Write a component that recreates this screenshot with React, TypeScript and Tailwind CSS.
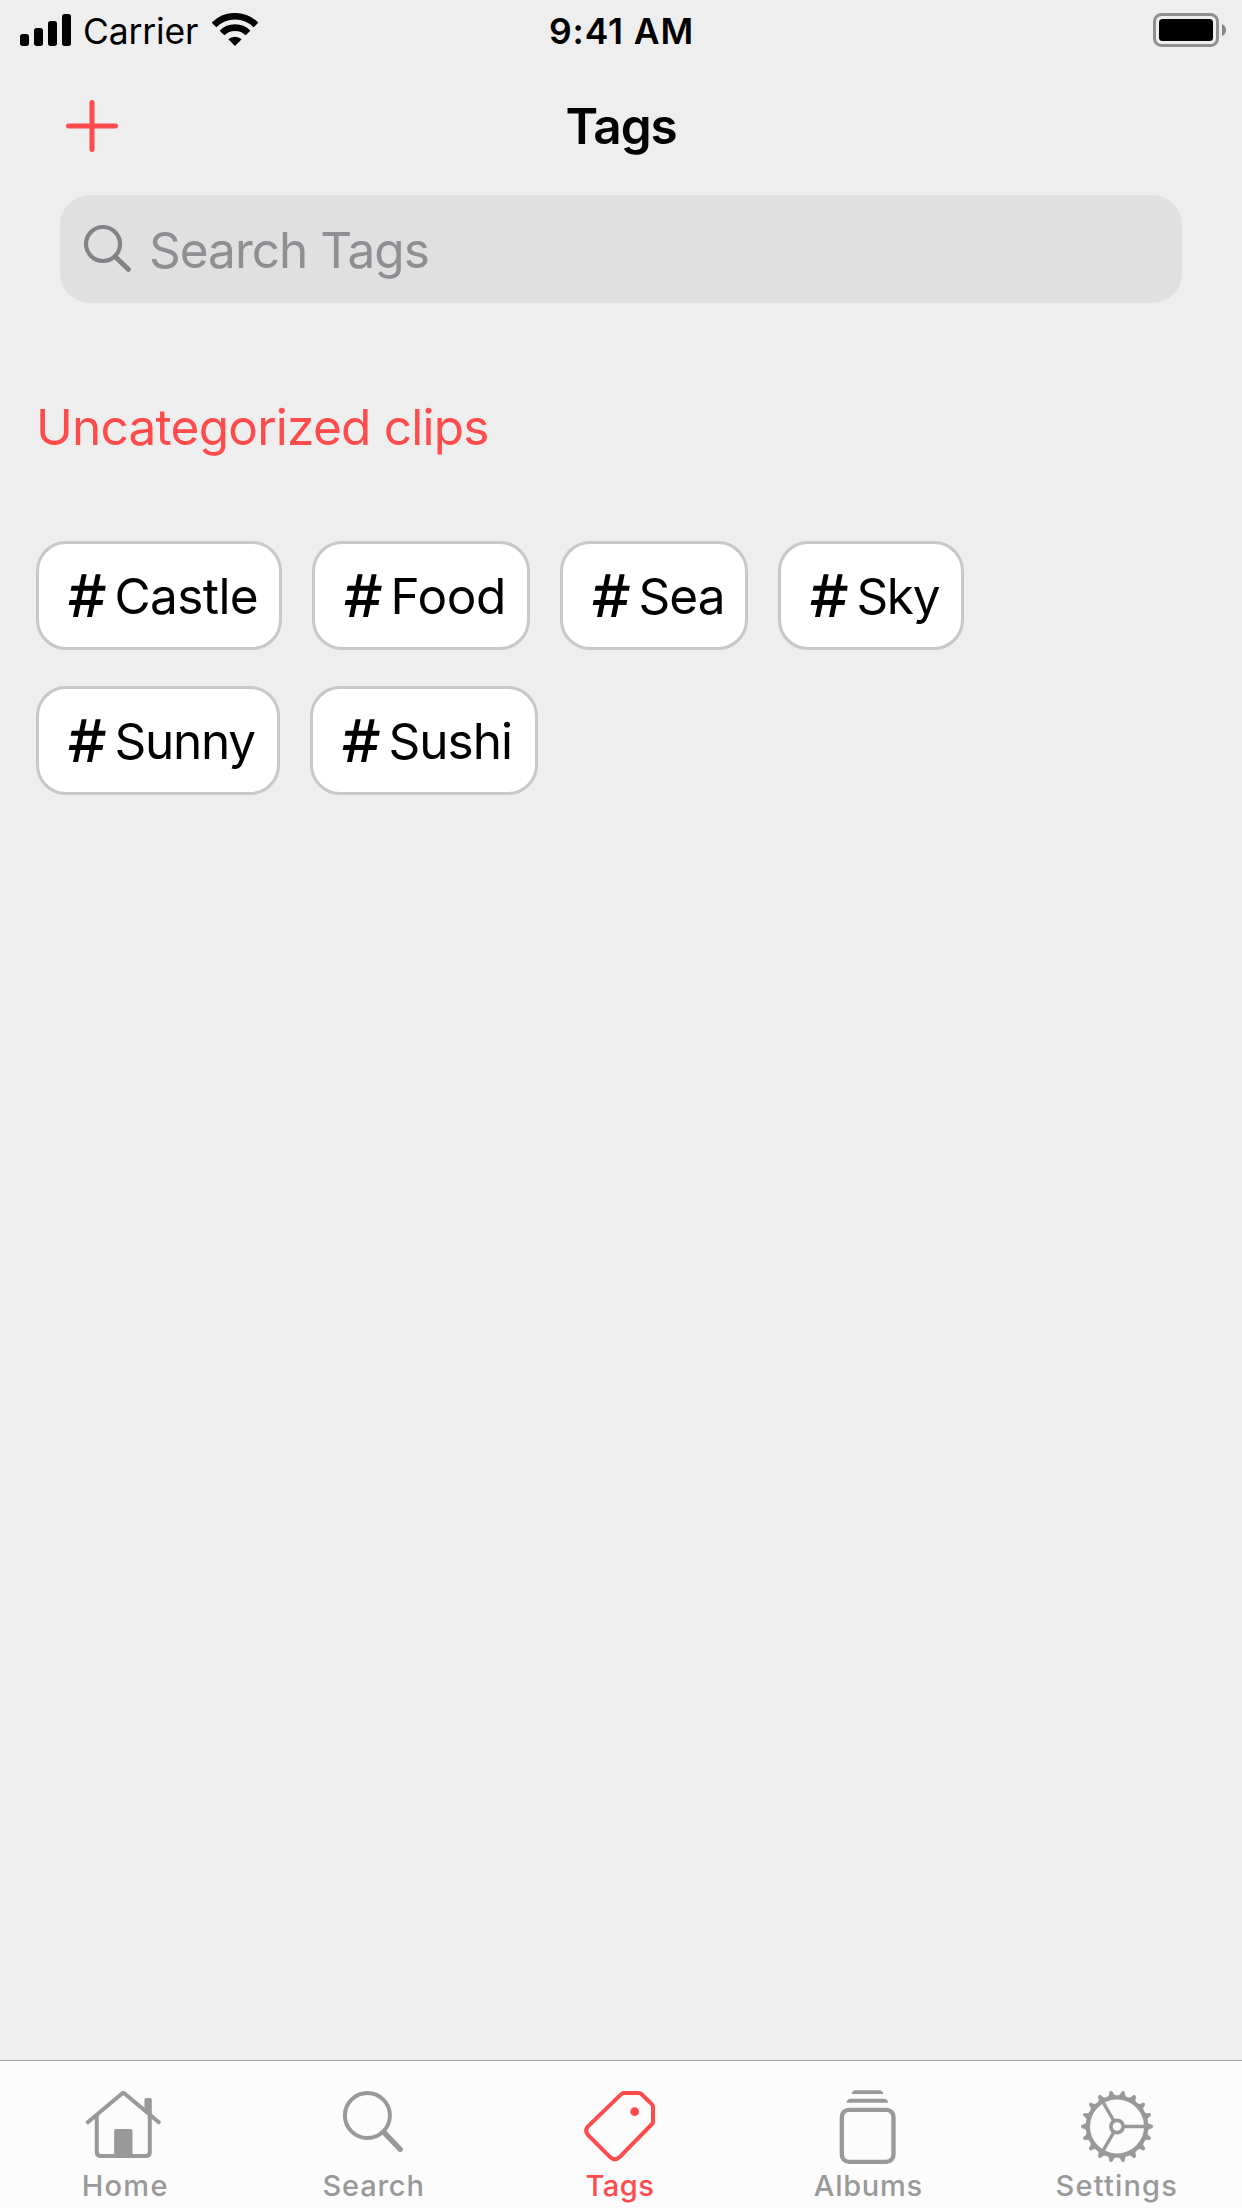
import type { ReactNode } from "react";

function SignalIcon() {
  return (
    <svg className="mt-[14px] h-8 w-[51px]" viewBox="0 0 51 32">
      <rect x="0" y="20" width="9" height="12" rx="2.7" />
      <rect x="14" y="14" width="9" height="18" rx="2.7" />
      <rect x="28" y="7" width="9" height="25" rx="2.7" />
      <rect x="42" y="0" width="9" height="32" rx="2.7" />
    </svg>
  );
}

function WifiIcon() {
  return (
    <svg className="mt-[13px] h-[33px] w-[46px]" viewBox="636 39 138 99">
      <g fill="none" stroke="#000" strokeWidth="20">
        <path d="M642 75 A89 89 0 0 1 768 75" />
        <path d="M666 99 A55 55 0 0 1 744 99" />
      </g>
      <path d="M685 118 A30 30 0 0 1 725 118 L706.500 136.500 Q705 138 703.500 136.500Z" />
    </svg>
  );
}

function BatteryIcon() {
  return (
    <svg className="mt-[13px] h-[34px] w-[74px]" viewBox="0 0 74 34">
      <rect x="1.500" y="1.500" width="63" height="31" rx="7" fill="none" stroke="#8f8f8f" strokeWidth="3" />
      <rect x="6" y="6" width="54" height="22" rx="3.500" />
      <path d="M69 11 Q73 13 73 17 Q73 21 69 23Z" fill="#858585" />
    </svg>
  );
}

function StatusBar() {
  return (
    <div className="grid h-[60px] grid-cols-3">
      <div className="flex items-start pl-5">
        <SignalIcon />
        <span className="mt-[10px] ml-3 w-[117px] text-[35.5px] leading-[43px] tracking-[-0.17px]">Carrier</span>
        <span className="ml-3">
          <WifiIcon />
        </span>
      </div>
      <div className="pt-[10px] pl-px text-center text-[35.5px] leading-[43px] font-[570] tracking-[0.85px]">9:41 AM</div>
      <div className="flex justify-end pr-[15px]">
        <BatteryIcon />
      </div>
    </div>
  );
}

function NavBar() {
  return (
    <header className="grid h-[135px] grid-cols-3 pt-9">
      <div className="pt-[3px] pl-[65px]">
        <svg className="h-[54px] w-[54px]" viewBox="0 0 54 54" stroke="#ff4b4b" strokeWidth="5" strokeLinecap="round">
          <path d="M3.500 27H50.500M27 3.500V50.500" />
        </svg>
      </div>
      <h1 className="text-center text-[49.5px] leading-[60px] font-semibold tracking-[-1.1px]">Tags</h1>
    </header>
  );
}

function SearchField() {
  return (
    <div className="mx-[60px] flex h-[108px] items-start rounded-[30px] bg-[#e0e0e0] pl-6">
      <svg className="mt-[29px] h-12 w-12" viewBox="0 0 48 48" fill="none" stroke="#828287" strokeLinecap="round">
        <circle cx="19" cy="20" r="17" strokeWidth="4.200" />
        <path d="M31.500 33L44.300 45.300" strokeWidth="5" />
      </svg>
      <span className="mt-[25px] ml-[17px] text-[49.5px] leading-[60px] tracking-[-1px] text-[#8e8e93]">Search Tags</span>
    </div>
  );
}

function HashIcon() {
  return (
    <svg className="mt-[5px] h-12 w-[43px] shrink-0" viewBox="138 573 129 144">
      <path d="M185 583H200L174 711H159ZM227 583H242L216 711H201Z" />
      <path d="M155 617H257L255 632H152ZM149 660H250L247 675H146Z" />
    </svg>
  );
}

function Chip({ name, className }: { name: string; className: string }) {
  return (
    <li
      className={`flex h-[109px] items-start rounded-[30px] border-[3px] border-[#c7c7cc] bg-white pt-[22px] pl-[27px] text-[49.5px] leading-[60px] ${className}`}
    >
      <HashIcon />
      <span className="ml-[5.5px]">{name}</span>
    </li>
  );
}

const chips = [
  { name: "Castle", className: "w-[246px] tracking-[-0.6px]" },
  { name: "Food", className: "w-[218px] tracking-[-0.38px]" },
  { name: "Sea", className: "w-[188px] tracking-[-0.9px]" },
  { name: "Sky", className: "w-[186px] tracking-[-1.4px]" },
  { name: "Sunny", className: "w-[244px] tracking-[-1.25px]" },
  { name: "Sushi", className: "w-[228px] tracking-[-1px]" },
];

function TabIcon({ viewBox, children }: { viewBox: string; children: ReactNode }) {
  return (
    <svg className="h-20 w-[90px]" viewBox={viewBox} fill="none" stroke="currentColor" strokeWidth="12" strokeLinecap="round" strokeLinejoin="round">
      {children}
    </svg>
  );
}

const teeth = Array.from({ length: 18 }, (_, i) => i * 20);

const tabs = [
  {
    label: "Home",
    className: "text-[#999999]",
    labelClass: "pl-[2px] tracking-[1.3px]",
    icon: (
      <TabIcon viewBox="57.6 105 270 240">
        <path d="M84 217L186 131Q190.500 127 195 131L297 217" />
        <path d="M111 197V306Q111 318 123 318H258Q270 318 270 306V197" />
        <path d="M254 182V149Q254 144 259 144H271Q276 144 276 149V204Z" fill="currentColor" stroke="none" />
        <rect x="163" y="237" width="55" height="84" rx="5" fill="currentColor" stroke="none" />
      </TabIcon>
    ),
  },
  {
    label: "Search",
    className: "text-[#999999]",
    labelClass: "pl-[2px] tracking-[0.78px]",
    icon: (
      <TabIcon viewBox="804.3 105 270 240">
        <circle cx="922.500" cy="196.500" r="67.500" />
        <path d="M973 248L1021 298" strokeWidth="16" />
      </TabIcon>
    ),
  },
  {
    label: "Tags",
    className: "text-[#ff4b4b]",
    labelClass: "pr-[2px] tracking-[0.5px]",
    icon: (
      <TabIcon viewBox="48 105 270 240">
        <path d="M191 129H237Q241 129 244 132L276 163Q279 166 279 170V215Q279 219 276 222L178 322Q165 334 151 322L84 255Q73 242 84 229L183 133Q187 129 191 129Z" />
        <circle cx="224" cy="185" r="13" fill="currentColor" stroke="none" />
      </TabIcon>
    ),
  },
  {
    label: "Albums",
    className: "text-[#999999]",
    labelClass: "pr-[2px] tracking-[0.74px]",
    icon: (
      <TabIcon viewBox="103 105 270 240">
        <rect x="156.500" y="179.500" width="155" height="156" rx="21" strokeWidth="13" />
        <g fill="currentColor" stroke="none">
          <path d="M186 132Q188 121 199 121H268Q279 121 281 132Z" />
          <path d="M170 158Q173 146 183 146H283Q293 146 296 158Z" />
        </g>
      </TabIcon>
    ),
  },
  {
    label: "Settings",
    className: "text-[#999999]",
    labelClass: "pr-[2px] tracking-[1.17px]",
    icon: (
      <TabIcon viewBox="128.4 105 270 240">
        <g transform="translate(260.500 229.500)">
          <circle r="87.500" strokeWidth="13" />
          <circle r="18.500" strokeWidth="11" />
          <g strokeWidth="10">
            <path d="M23 0H86" />
            <path d="M23 0H86" transform="rotate(120)" />
            <path d="M23 0H86" transform="rotate(240)" />
          </g>
          {teeth.map((a) => (
            <path key={a} d="M90 -13Q97 -6 105 -5Q108 -4 108 0Q108 4 105 5Q97 6 90 13Z" fill="currentColor" stroke="none" transform={`rotate(${a})`} />
          ))}
        </g>
      </TabIcon>
    ),
  },
];

function TabBar() {
  return (
    <nav className="grid h-[148px] grid-cols-5 border-t border-[#a5a5a5] bg-[#fcfcfc] pt-6">
      {tabs.map((tab) => (
        <div key={tab.label} className={`flex flex-col items-center ${tab.className}`}>
          {tab.icon}
          <span className={`mt-[3px] text-[29px] leading-[35px] font-medium ${tab.labelClass}`}>{tab.label}</span>
        </div>
      ))}
    </nav>
  );
}

export default function App() {
  return (
    <div className="flex h-[2208px] w-[1242px] flex-col overflow-hidden bg-[#eeeeee] font-[Inter,sans-serif] text-black">
      <StatusBar />
      <NavBar />
      <SearchField />
      <main className="flex-1 px-9 pt-[94px]">
        <p className="text-[49.5px] leading-[60px] tracking-[-0.76px] text-[#ff4b4b]">Uncategorized clips</p>
        <ul className="mt-[84px] flex w-[1000px] flex-wrap gap-x-[30px] gap-y-9">
          {chips.map((chip) => (
            <Chip key={chip.name} {...chip} />
          ))}
        </ul>
      </main>
      <TabBar />
    </div>
  );
}
